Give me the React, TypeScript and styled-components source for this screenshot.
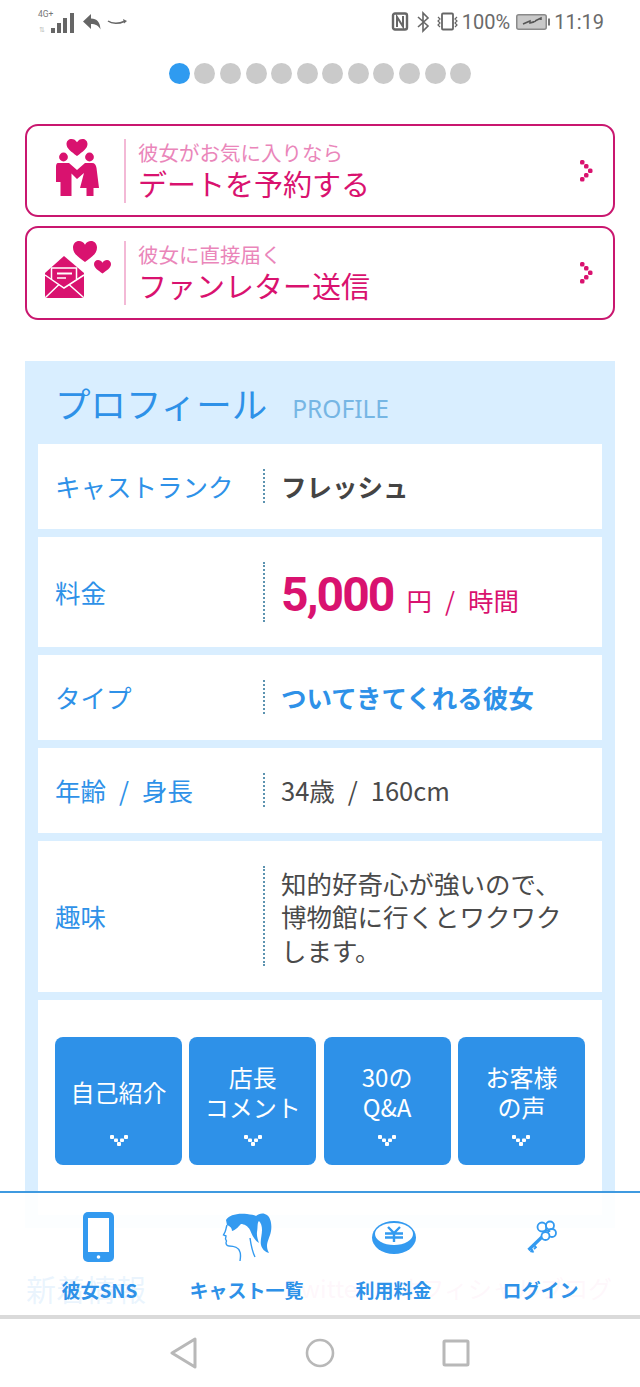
import React from 'react'
import styled, { createGlobalStyle } from 'styled-components'

const BLUE = '#2e91e8'
const PINK = '#d9126f'
const FONT = '"Noto Sans CJK JP", "Noto Sans", sans-serif'

const GlobalStyle = createGlobalStyle`
  html, body {
    margin: 0;
    padding: 0;
    background: #fff;
    font-family: ${FONT};
  }
`
const Page = styled.div`
  display: flex;
  flex-direction: column;
  width: 640px;
  height: 1387px;
  overflow: hidden;
  background: #fff;
`
const Screen = styled.div`
  position: relative;
  flex: 1;
  min-height: 0;
  overflow: hidden;
`
const StatusBar = styled.div`
  display: flex;
  align-items: center;
  justify-content: space-between;
  height: 44px;
  padding: 0 36px;
  color: #6a6a6a;
  font-family: Roboto, sans-serif;
  font-size: 20px;
`
const StatusGroup = styled.div`
  display: flex;
  align-items: center;
  gap: 3px;
`
const Dots = styled.div`
  display: flex;
  justify-content: center;
  gap: 4.6px;
  margin-top: 19px;
`
const Dot = styled.span`
  width: 21px;
  height: 21px;
  border-radius: 50%;
  background: ${p => (p.$active ? '#2f9bf0' : '#cacaca')};
`
const Cards = styled.div`
  display: flex;
  flex-direction: column;
  gap: 9px;
  margin: 40px 25px 0;
`
const Card = styled.div`
  display: flex;
  align-items: center;
  height: ${p => p.$height}px;
  border: 2px solid #c9176f;
  border-radius: 13px;
  background: #fff;
`
const CardIcon = styled.div`
  display: flex;
  flex-shrink: 0;
  box-sizing: border-box;
  width: 97px;
  padding-left: 13px;
`
const CardText = styled.div`
  flex: 1;
  height: 64px;
  padding-left: 12px;
  border-left: 2px solid #f3b9d6;
`
const CardSub = styled.div`
  color: #ea86ba;
  font-size: 20.5px;
  line-height: 26px;
`
const CardTitle = styled.div`
  color: ${PINK};
  font-size: 29px;
  line-height: 36px;
`
const CardArrow = styled.div`
  display: flex;
  width: 34px;
`
const Panel = styled.section`
  margin: 41px 25px 0;
  padding: 0 13px 13px;
  background: #d9eeff;
`
const PanelHead = styled.div`
  display: flex;
  align-items: baseline;
  gap: 25px;
  height: 83px;
  padding-left: 17px;
  line-height: 84px;
`
const PanelTitle = styled.h2`
  margin: 0;
  color: ${BLUE};
  font-size: 35.5px;
  font-weight: 400;
`
const PanelSub = styled.span`
  color: #76b6e4;
  font-family: "Noto Sans", sans-serif;
  font-size: 24.5px;
`
const Rows = styled.div`
  display: flex;
  flex-direction: column;
  gap: 8px;
`
const Row = styled.div`
  display: flex;
  align-items: center;
  box-sizing: border-box;
  height: ${p => p.$height}px;
  padding: 0 0 1px 17px;
  background: #fff;
`
const RowLabel = styled.div`
  flex-shrink: 0;
  width: 208px;
  color: ${BLUE};
  font-size: 25.5px;
  line-height: 34px;
`
const RowValue = styled.div`
  flex: 1;
  padding-left: 16px;
  border-left: 2px dotted #5c93b0;
  color: #4a4a4a;
  font-size: 25.5px;
  line-height: 34px;
`
const Sep = styled.span`
  margin: 0 13px;
`
const BoldValue = styled.span`
  color: ${p => p.$color ?? '#444'};
  font-weight: 700;
`
const PriceValue = styled(RowValue)`
  display: flex;
  align-items: baseline;
  height: 60px;
  color: ${PINK};
  line-height: 66px;
`
const Price = styled.span`
  margin-right: 13px;
  font-family: Roboto, sans-serif;
  font-size: 48px;
  font-weight: 700;
  letter-spacing: -1.9px;
`
const BodyValue = styled(RowValue)`
  padding-right: 30px;
  line-height: 33.5px;
`
const ButtonRow = styled.div`
  display: grid;
  grid-template-columns: repeat(4, 127px);
  gap: 7.3px;
  padding: 37px 17px 50px;
  background: #fff;
`
const TabButton = styled.div`
  position: relative;
  display: flex;
  flex-direction: column;
  align-items: center;
  justify-content: center;
  height: 128px;
  padding-bottom: 18px;
  box-sizing: border-box;
  border-radius: 8px;
  background: #2e91e8;
  color: #fff;
  font-size: 24px;
  line-height: 30px;
  text-align: center;
`
const ButtonChevron = styled.svg`
  position: absolute;
  bottom: 19px;
  left: 50%;
  margin-left: -9px;
`
const FadedTabs = styled.div`
  display: flex;
  align-items: center;
  margin: 40px 28px 0 26px;
  color: #f0a8cf;
  font-size: 24px;
  line-height: 40px;
`
const FadedLead = styled.span`
  margin-right: auto;
  color: ${BLUE};
  font-size: 30px;
`
const FadedBlog = styled.span`
  margin-left: 30px;
`
const BottomNav = styled.nav`
  position: absolute;
  left: 0;
  right: 0;
  bottom: 0;
  display: grid;
  grid-template-columns: repeat(4, 147px);
  justify-content: center;
  height: 122px;
  border-top: 2px solid #3f9ae0;
  background: rgba(255, 255, 255, 0.9);
`
const NavItem = styled.div`
  display: flex;
  flex-direction: column;
  align-items: center;
`
const NavIcon = styled.div`
  display: flex;
  align-items: center;
  justify-content: center;
  height: 72px;
  margin-top: 8px;
`
const NavLabel = styled.div`
  margin-top: 4px;
  color: ${BLUE};
  font-size: 19px;
  font-weight: 700;
  line-height: 26px;
  white-space: nowrap;
`
const SoftKeys = styled.div`
  display: grid;
  grid-template-columns: 136px 136px 136px;
  justify-content: center;
  justify-items: center;
  align-items: center;
  flex-shrink: 0;
  height: 68px;
  border-top: 4px solid #dadada;
`

function CoupleIcon() {
  return (
    <svg width="80" height="75" viewBox="0 3 80 75" fill={PINK}>
      <path d="M37 26C31 21.500 26.500 18.500 26.500 14C26.500 11 28.800 9 31.500 9C33.800 9 35.800 10.200 37 12.300C38.200 10.200 40.200 9 42.500 9C45.200 9 47.500 11 47.500 14C47.500 18.500 43 21.500 37 26z" />
      <circle cx="23.500" cy="27" r="4.400" />
      <circle cx="49.500" cy="27" r="4.400" />
      <path d="M18 33H29L37 40L45 33H52C55 33 56 35 56.500 38L59 58H53.500V66H46.500V58H40L44 43L37 49L31.500 43.500V66H20.500V52H16V37C16 35 16.500 33 18 33z" />
    </svg>
  )
}

function LetterIcon() {
  return (
    <svg width="80" height="70" viewBox="0 3 80 70" fill={PINK}>
      <path d="M45 27C39 22.500 33 19 33 12.500C33 8.700 35.800 6 39 6C41.500 6 43.700 7.300 45 9.700C46.300 7.300 48.500 6 51 6C54.200 6 57 8.700 57 12.500C57 19 51 22.500 45 27z" />
      <path d="M62.500 38.500C58.500 35.500 54 33 54 29C54 26.700 55.800 25 58 25C59.900 25 61.500 26 62.500 27.800C63.500 26 65.100 25 67 25C69.200 25 71 26.700 71 29C71 33 66.500 35.500 62.500 38.500z" />
      <path d="M24 21L44 38V60C44 62 43 63 41 63H8C6 63 5 62 5 60V38z" />
      <g fill="none" stroke="#fff">
        <path d="M11.500 44V33H36.500V44" strokeWidth="1.500" />
        <path d="M17 38.500H32" strokeWidth="2" />
        <path d="M17 43H26" strokeWidth="1.500" />
        <path d="M5 40L24 53L44 40" strokeWidth="1.500" />
        <path d="M6 62L19 49.500M43 62L29 49.500" strokeWidth="1.500" />
      </g>
    </svg>
  )
}

function DotChevron() {
  return (
    <svg width="14" height="22" viewBox="0 0 14 22" fill={PINK}>
      <rect x="1" y="0" width="4.500" height="4.500" rx="1.500" />
      <rect x="5" y="4" width="4.500" height="4.500" rx="1.500" />
      <rect x="9" y="8.500" width="4.500" height="4.500" rx="1.500" />
      <rect x="5" y="13" width="4.500" height="4.500" rx="1.500" />
      <rect x="1" y="17" width="4.500" height="4.500" rx="1.500" />
    </svg>
  )
}

function WhiteChevron() {
  return (
    <ButtonChevron width="18" height="11" viewBox="0 0 18 11" fill="#fff">
      <rect x="0" y="0" width="4" height="4" rx="1" />
      <rect x="4" y="3.500" width="4" height="3.500" rx="1" />
      <rect x="7" y="7" width="4" height="4" rx="1" />
      <rect x="10" y="3.500" width="4" height="3.500" rx="1" />
      <rect x="14" y="0" width="4" height="4" rx="1" />
    </ButtonChevron>
  )
}

function PhoneIcon() {
  return (
    <svg width="34" height="50" viewBox="0 0 34 50">
      <rect x="0" y="0" width="31" height="50" rx="5" fill="#339af0" />
      <rect x="5" y="6" width="21" height="34" fill="#fff" />
      <circle cx="15.500" cy="45" r="1.800" fill="#fff" />
    </svg>
  )
}

function WomanIcon() {
  return (
    <svg width="50" height="50" viewBox="5 7 50 50" fill="none">
      <path
        d="M9 15C12 10 20 8 30 9C34 9.500 37 10 39 11C42 8 47 7.500 50 10C54 13 55 20 54 26C53 32 50 36 50 41C50 44 51 46 52 48C48 47 45 44 44 40C43 36 45 30 45 25C45 21 44 18 42 16C40 18 41 22 40 27C39.500 31 41 35 42 38C38 36 35 30 33 25C31 21 27 19 24 19C22 21 19 25 15 26C15 23 13 21 10 20z"
        fill="#339af0"
      />
      <path
        d="M10 20C9 23 9 25 8 27L6.500 30L9 31L8.500 34L9.500 36C8 39 10 41 12 41C17 41 22 43 23 47C24 50 23.500 53 23 56M33 33C34 40 35 46 38 52"
        stroke="#339af0"
        strokeWidth="1.400"
      />
    </svg>
  )
}

function CoinIcon() {
  return (
    <svg width="44" height="34" viewBox="0 0 44 34">
      <ellipse cx="22" cy="17.500" rx="22" ry="16.500" fill="#339af0" />
      <ellipse cx="22" cy="14" rx="19" ry="11" fill="#fff" />
      <path d="M16 7l6 6 6-6M13 13.500h18M13 17.500h18M22 13v9" stroke="#339af0" strokeWidth="2.400" fill="none" />
    </svg>
  )
}

function KeyIcon() {
  return (
    <svg width="50" height="50" viewBox="0 0 50 50" fill="#fff" stroke="#339af0">
      <path d="M26 25L12.500 38" strokeWidth="3.200" />
      <path d="M14.500 40l2.500-2.500M18 37l2.500-2.500M14 36l3.500 4.500M18 33l2.500 3" strokeWidth="1.800" fill="none" />
      <circle cx="26" cy="15" r="4.500" strokeWidth="1.800" />
      <circle cx="34" cy="13.500" r="4" strokeWidth="1.800" />
      <circle cx="36" cy="21" r="4" strokeWidth="1.800" />
      <circle cx="29.500" cy="24" r="4" strokeWidth="1.800" />
      <path d="M29 19c2-1 4-1 5 1M30 13c0 2 0 4 1 5" strokeWidth="1.500" fill="none" />
    </svg>
  )
}

function SignalIcon() {
  return (
    <svg width="44" height="28" viewBox="0 0 44 28">
      <text x="2" y="9" fontSize="8.500" fontFamily="Roboto, sans-serif" fill="#777">4G+</text>
      <text x="3" y="24" fontSize="7" fontFamily="Roboto, sans-serif" fill="#bbb">⇅</text>
      <rect x="15" y="20" width="4" height="5" fill="#666" />
      <rect x="21" y="15" width="4" height="10" fill="#666" />
      <rect x="27" y="10" width="4" height="15" fill="#666" />
      <rect x="34" y="5" width="4" height="20" fill="#666" />
    </svg>
  )
}

function StatusLeftIcons() {
  return (
    <svg width="46" height="18" viewBox="0 0 46 18" fill="#666">
      <path d="M0 8.500 8 1v4.500c6 0 9 3.500 9.500 11-2-4-5-5.500-9.500-5.500V16z" />
      <path d="M25 8c4 3 11 3 16 .5" stroke="#666" strokeWidth="1.500" fill="none" />
      <path d="M40 6l4 2-3 2.500z" />
    </svg>
  )
}

function StatusRightIcons() {
  return (
    <svg width="70" height="22" viewBox="0 0 70 22" fill="none" stroke="#666">
      <rect x="4" y="2.500" width="14" height="16" rx="2" strokeWidth="2.400" />
      <path d="M8 16V6l6 9.500V5" strokeWidth="2" />
      <path d="M29 6l10 9-5 5V2l5 5-10 9" strokeWidth="1.600" />
      <rect x="53" y="2.500" width="11" height="16" rx="1" strokeWidth="1.800" />
      <path d="M49 6l2 2-2 2 2 2-2 2 2 2M68 6l-2 2 2 2-2 2 2 2-2 2" strokeWidth="1.200" />
    </svg>
  )
}

function BatteryIcon() {
  return (
    <svg width="38" height="18" viewBox="0 0 38 18">
      <rect x="3.750" y="1.750" width="29.500" height="14.500" rx="2" fill="#c9c9c9" stroke="#8a8a8a" strokeWidth="1.500" />
      <rect x="35" y="5.500" width="2" height="7" fill="#777" />
      <path d="M10 11l7-3v2l4-1M17 10l6-2M22 8l6-3v2" stroke="#555" strokeWidth="1.500" fill="none" />
    </svg>
  )
}

function BackKey() {
  return (
    <svg width="28" height="32" viewBox="0 0 28 32" fill="none" stroke="#b8b8b8" strokeWidth="3" strokeLinejoin="round">
      <path d="M25 2v28L2 16z" />
    </svg>
  )
}

function HomeKey() {
  return (
    <svg width="30" height="30" viewBox="0 0 30 30" fill="none" stroke="#b8b8b8" strokeWidth="2.600">
      <circle cx="15" cy="15" r="13" />
    </svg>
  )
}

function RecentKey() {
  return (
    <svg width="28" height="28" viewBox="0 0 28 28" fill="none" stroke="#b8b8b8" strokeWidth="3" strokeLinejoin="round">
      <rect x="2" y="2" width="24" height="24" rx="1" />
    </svg>
  )
}

const dots = Array.from({ length: 12 }, (_, i) => i)

const navItems = [
  { label: '彼女SNS', icon: <PhoneIcon /> },
  { label: 'キャスト一覧', icon: <WomanIcon /> },
  { label: '利用料金', icon: <CoinIcon /> },
  { label: 'ログイン', icon: <KeyIcon /> },
]

export default function App() {
  return (
    <Page>
      <GlobalStyle />
      <Screen>
        <StatusBar>
          <StatusGroup>
            <SignalIcon />
            <StatusLeftIcons />
          </StatusGroup>
          <StatusGroup>
            <StatusRightIcons />
            <span>100%</span>
            <BatteryIcon />
            <span>11:19</span>
          </StatusGroup>
        </StatusBar>

        <Dots>
          {dots.map(i => (
            <Dot key={i} $active={i === 0} />
          ))}
        </Dots>

        <Cards>
          <Card $height={89}>
            <CardIcon><CoupleIcon /></CardIcon>
            <CardText>
              <CardSub>彼女がお気に入りなら</CardSub>
              <CardTitle>デートを予約する</CardTitle>
            </CardText>
            <CardArrow><DotChevron /></CardArrow>
          </Card>
          <Card $height={90}>
            <CardIcon><LetterIcon /></CardIcon>
            <CardText>
              <CardSub>彼女に直接届く</CardSub>
              <CardTitle>ファンレター送信</CardTitle>
            </CardText>
            <CardArrow><DotChevron /></CardArrow>
          </Card>
        </Cards>

        <Panel>
          <PanelHead>
            <PanelTitle>プロフィール</PanelTitle>
            <PanelSub>PROFILE</PanelSub>
          </PanelHead>
          <Rows>
            <Row $height={85}>
              <RowLabel>キャストランク</RowLabel>
              <RowValue><BoldValue>フレッシュ</BoldValue></RowValue>
            </Row>
            <Row $height={110}>
              <RowLabel>料金</RowLabel>
              <PriceValue><Price>5,000</Price> 円<Sep>/</Sep>時間</PriceValue>
            </Row>
            <Row $height={85}>
              <RowLabel>タイプ</RowLabel>
              <RowValue><BoldValue $color={BLUE}>ついてきてくれる彼女</BoldValue></RowValue>
            </Row>
            <Row $height={85}>
              <RowLabel>年齢<Sep>/</Sep>身長</RowLabel>
              <RowValue>34歳<Sep>/</Sep>160cm</RowValue>
            </Row>
            <Row $height={151}>
              <RowLabel>趣味</RowLabel>
              <BodyValue>知的好奇心が強いので、博物館に行くとワクワクします。</BodyValue>
            </Row>
            <ButtonRow>
              <TabButton>自己紹介<WhiteChevron /></TabButton>
              <TabButton>店長<br />コメント<WhiteChevron /></TabButton>
              <TabButton>30の<br />Q&amp;A<WhiteChevron /></TabButton>
              <TabButton>お客様<br />の声<WhiteChevron /></TabButton>
            </ButtonRow>
          </Rows>
        </Panel>

        <FadedTabs>
          <FadedLead>新着情報</FadedLead>
          <span>Twitter</span>
          <FadedBlog>オフィシャルブログ</FadedBlog>
        </FadedTabs>

        <BottomNav>
          {navItems.map(item => (
            <NavItem key={item.label}>
              <NavIcon>{item.icon}</NavIcon>
              <NavLabel>{item.label}</NavLabel>
            </NavItem>
          ))}
        </BottomNav>
      </Screen>
      <SoftKeys>
        <BackKey />
        <HomeKey />
        <RecentKey />
      </SoftKeys>
    </Page>
  )
}
